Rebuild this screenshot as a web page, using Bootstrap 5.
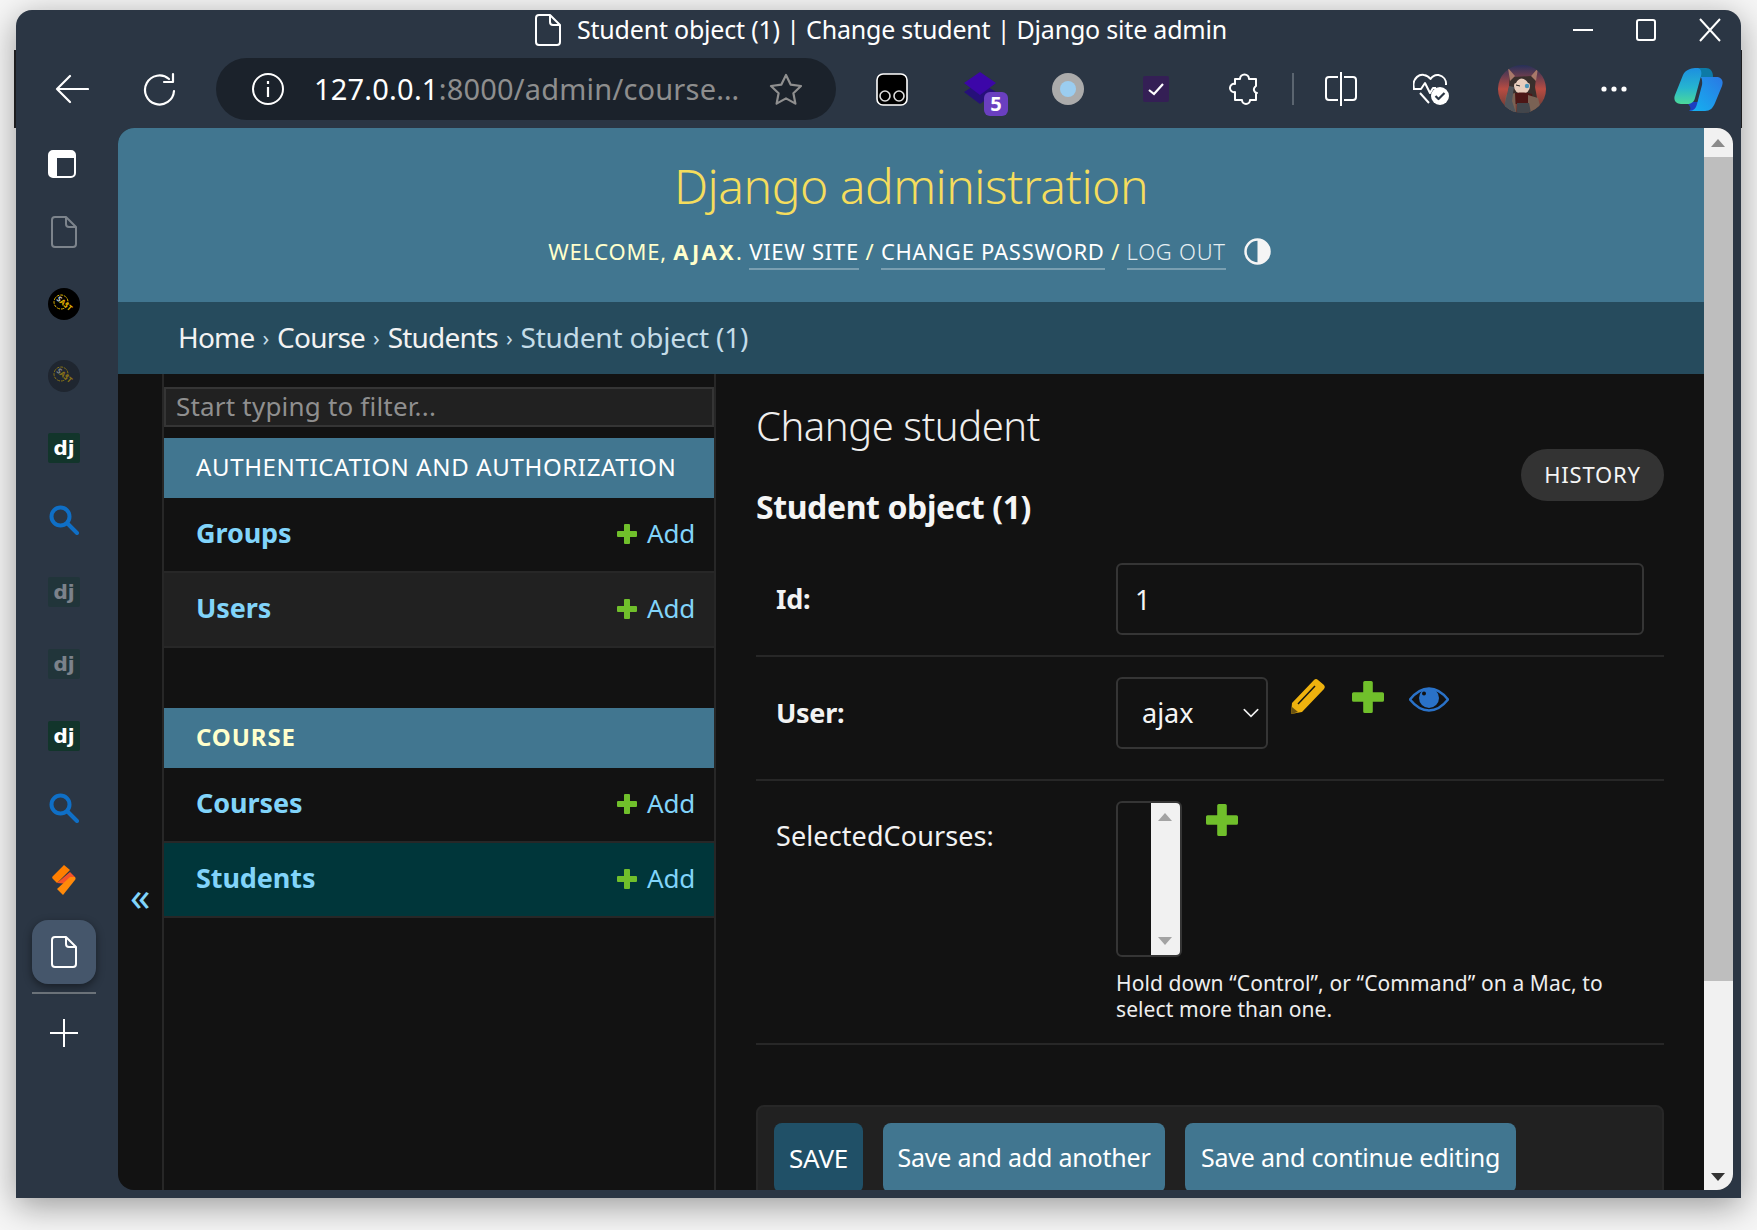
<!DOCTYPE html>
<html lang="en">
<head>
<meta charset="utf-8">
<title>Student object (1) | Change student | Django site admin</title>
<link href="https://cdn.jsdelivr.net/npm/bootstrap@5.3.0/dist/css/bootstrap.min.css" rel="stylesheet">
<style>
html,body{height:100%;overflow:hidden}
body{background:#f6f6f6;font-family:"Noto Sans","Lato",sans-serif;color:#f5f5f5}
.win{position:absolute;left:16px;top:10px;width:1725px;height:1188px;background:#2b3644;border-radius:16px 16px 0 0;box-shadow:0 8px 34px rgba(0,0,0,.38)}
.ttl{height:40px;display:grid;grid-template-columns:1fr auto 1fr;align-items:center;color:#fff}
.ttl-main{grid-column:2;padding-left:5px;font-size:25px;letter-spacing:-.2px;white-space:nowrap;font-weight:400}
.ttl-ctl{justify-self:end;padding-right:19px;gap:41px}
.tbar{height:78px;margin-left:-2px;margin-right:-1px;border-left:2px solid #1d1d1f;border-right:1px solid #1d1d1f;padding-left:16px;display:grid;grid-template-columns:80px 104px 632px 88px 90px 84px 92px 84px 14px 82px 98px 84px 100px 68px;place-items:center}
.reload{margin-right:8px}
.omni{justify-self:start;width:620px;height:62px;background:#1b222b;border-radius:31px;padding:0 33px 0 36px;font-size:29px;letter-spacing:.2px;white-space:nowrap}
.omni b{font-weight:400;color:#fff}.omni span{color:#8e8e8e}
.omni-url{margin-left:30px;margin-right:auto}
.ext-stack{margin:10px 0 0 10px}
.vsep{width:2px;height:32px;background:#5b6570}
.bdy{height:1062px}
.rail{width:102px;flex:none;padding:0 22px 0 16px}
.rail-it{width:64px;height:72px;flex:none}
.rail-it.sm{height:64px;margin-bottom:4px}
.rail-it.act{height:64px;margin-top:4px;background:#45566b;border-radius:16px;box-shadow:0 3px 8px rgba(0,0,0,.45)}
.rail-sep{width:64px;height:2px;background:#6b7279;margin-top:8px;flex:none}
.rail-add{height:78px;width:62px;flex:none}
.tabs-ico{margin-right:4px}
.dimmed{opacity:.38}
.panel{width:1615px;height:1062px;border-radius:16px;overflow:hidden;background:#121212;flex:none}
.pg{width:1586px;flex:none;height:100%}
.hdr{height:174px;background:#417690;text-align:center}
.hdr-t{font-size:48px;font-weight:300;color:#f5dd5d;line-height:60px;padding-top:28px;height:89px;letter-spacing:-.5px;box-sizing:border-box}
.tools{margin-top:17px;font-size:22px;color:#ffc;line-height:34px;letter-spacing:.75px;font-weight:400;margin-left:-3px;white-space:nowrap}
.tools b{font-weight:700;letter-spacing:2.3px}
.tools a{color:#fff;text-decoration:none;border-bottom:2px solid rgba(255,255,255,.3);padding-bottom:2px}
.tools a.lo{color:#e6eef2;font-weight:300}
.theme{margin-left:18px;vertical-align:-5px}
.crumb{height:72px;background:#264b5d;padding:0 0 2px 60px;font-size:28px;color:#c4dce8;letter-spacing:-.2px;font-weight:400}
.crumb a{color:#f2f2f2;text-decoration:none;letter-spacing:-.8px}
.crumb i{font-style:normal;margin:0 8px;font-size:22px}
.mn{height:816px}
.tog{width:44px;flex:none;color:#81d4fa;font-size:40px;padding-top:502px;padding-left:12px;line-height:1}
.sd{width:554px;flex:none;border-left:2px solid #272727;border-right:2px solid #272727;height:100%;padding-top:13px}
.flt{height:40px;margin:0 0 11px;border:2px solid #353535;background:#212121;font-size:26px;color:#999;padding:0 10px 2px;letter-spacing:.2px;border-radius:0;width:100%;box-shadow:none}
.flt::placeholder{color:#8f8f8f}
.flt:focus{background:#212121;border-color:#353535;box-shadow:none}
.cap{height:60px;background:#417690;padding:0 0 2px 32px;font-size:24px;color:#fff;letter-spacing:.65px;font-weight:400}
.cap.cur{color:#ffc;font-weight:700;letter-spacing:.9px}
.rw{height:75px;border-bottom:2px solid #272727;padding:0 19px 2px 32px;background:#121212;color:#81d4fa}
.rw.alt{background:#212121}.rw.sel{background:#00363a}
.rw-n{font-weight:700;letter-spacing:-.1px;font-size:27px}
.rw-a{font-size:26px;letter-spacing:-.2px;gap:10px}
.sep-g{height:60px}
.ct{flex:1;padding:0 40px 0 40px;min-width:0}
.h1x{height:60px;margin-top:22px;font-size:40px;font-weight:300;color:#eee;letter-spacing:-.45px;line-height:60px}
.hst{position:absolute;top:75px;right:40px;width:143px;height:52px;border-radius:26px;background:#333;color:#f5f5f5;font-size:22px;letter-spacing:.8px;padding:0 0 2px;border:0}
.h2x{height:48px;margin-top:27px;font-size:32px;font-weight:700;letter-spacing:-.4px;line-height:48px;color:#f5f5f5}
.frm{margin-top:10px}
.fr{border-bottom:2px solid #272727;display:flex}
.fr-l{width:360px;flex:none;padding-left:20px;font-size:27px;letter-spacing:-.3px;color:#f2f2f2}
.fr-l.top{padding-top:15px;letter-spacing:.1px}
.fr1{padding:22px 0 20px}.fr2{padding:20px 0 30px}.fr3{padding:20px 0 21px}
.inp{width:528px;height:72px;background:#121212;border:2px solid #353535;border-radius:6px;color:#f5f5f5;font-size:27px;padding:0 17px}
.inp:focus{background:#121212;color:#f5f5f5;border-color:#353535;box-shadow:none}
.selx{width:152px;height:72px;background-color:#121212;border:2px solid #353535;border-radius:6px;color:#f5f5f5;font-size:27px;padding:0 0 0 24px;background-size:18px 18px;background-position:right 6px center;background-image:url("data:image/svg+xml,%3csvg xmlns='http://www.w3.org/2000/svg' viewBox='0 0 16 16'%3e%3cpath fill='none' stroke='%23eee' stroke-linecap='round' stroke-width='1.4' d='m2 5 6 6 6-6'/%3e%3c/svg%3e")}
.selx:focus{background-color:#121212;border-color:#353535;color:#f5f5f5;box-shadow:none}
.msel{width:66px;height:156px;border:2px solid #353535;border-radius:6px;background:#121212;overflow:hidden;justify-content:flex-end}
.msb{width:29px;background:#f1f1f1;position:relative;height:100%}
.tri-u,.tri-d{width:0;height:0;border-left:7px solid transparent;border-right:7px solid transparent;margin:0 auto}
.tri-u{border-bottom:8px solid #a3a3a3}.tri-d{border-top:8px solid #a3a3a3}
.hlp{font-size:21px;line-height:26px;letter-spacing:.1px;color:#eee;margin-top:13px;width:510px}
.sbm{margin-top:60px;background:#212121;border:2px solid #272727;border-radius:8px 8px 0 0;padding:16px 16px 30px;gap:20px}
.bt{height:70px;border:0;border-radius:8px;background:#417690;color:#fff;font-size:25px;letter-spacing:-.2px;padding:0}
.bt:hover{background:#417690;color:#fff}
.bt.p{background:#205067;width:89px;font-size:26px}.bt.p:hover{background:#205067}.bt.b{width:282px}.bt.c{width:331px}
.vscr{width:29px;flex:none;background:#f1f1f1;height:100%;position:relative;padding-top:29px}
.vthumb{height:824px;background:#bebebe}
.vscr .tri-u{position:absolute;top:11px;left:7px;border-bottom-color:#8a8a8a}
.vscr .tri-d{position:absolute;bottom:9px;left:7px;border-top-color:#333}
.uico{margin:1px 0 0 22px}.uico2{margin:4px 0 0 26px}.uico3{margin:10px 0 0 25px}.uico4{margin:3px 0 0 24px}
.abs-t{position:absolute;top:10px;left:7px}.abs-b{position:absolute;bottom:10px;left:7px}
</style>
</head>
<body>
<div class="win d-flex flex-column">
  <div class="ttl">
    <div class="ttl-main d-flex align-items-center gap-3 ms-0">
      <svg width="26" height="32" viewBox="0 0 26 32" fill="none" stroke="#fff" stroke-width="2" stroke-linejoin="round"><path d="M4 1h11l10 10v17a3 3 0 0 1-3 3H4a3 3 0 0 1-3-3V4a3 3 0 0 1 3-3z"/><path d="M15 1v7a3 3 0 0 0 3 3h7"/></svg>
      <span>Student object (1) | Change student | Django site admin</span>
    </div>
    <div class="ttl-ctl d-flex align-items-center">
      <svg width="22" height="22" viewBox="0 0 22 22"><path d="M1 11h20" stroke="#fff" stroke-width="2"/></svg>
      <svg width="22" height="22" viewBox="0 0 22 22" fill="none"><rect x="2" y="1" width="18" height="20" rx="2" stroke="#fff" stroke-width="2"/></svg>
      <svg width="24" height="24" viewBox="0 0 24 24"><path d="M2 1l20 22M22 1L2 23" stroke="#fff" stroke-width="2"/></svg>
    </div>
  </div>
  <div class="tbar">
    <svg width="34" height="30" viewBox="0 0 34 30" fill="none" stroke="#fff" stroke-width="2.2" stroke-linecap="round" stroke-linejoin="round"><path d="M33 15H2M15 2 2 15l13 13"/></svg>
    <svg class="reload" width="36" height="34" viewBox="0 0 36 34" fill="none" stroke="#fff" stroke-width="2.2" stroke-linecap="round" stroke-linejoin="round"><path d="M27 7A14.5 14.5 0 1 0 32 19"/><path d="M31 2v8h-9"/></svg>
    <div class="omni d-flex align-items-center">
      <svg width="32" height="32" viewBox="0 0 32 32" fill="none" stroke="#fff" stroke-width="2"><circle cx="16" cy="16" r="15"/><path d="M16 14v10M16 8v3" stroke-width="2.2"/></svg>
      <div class="omni-url"><b>127.0.0.1</b><span>:8000/admin/course…</span></div>
      <svg width="34" height="32" viewBox="0 0 34 32" fill="none" stroke="#8f8f8f" stroke-width="2.2" stroke-linejoin="round"><path d="M17 2l4.6 9.6 10.4 1.4-7.6 7.2 2 10.4L17 25.4 7.6 30.6l2-10.4L2 13l10.4-1.4z"/></svg>
    </div>
    <svg width="32" height="33" viewBox="0 0 32 33"><rect x="1" y="1" width="30" height="31" rx="6" fill="#000" stroke="#fff" stroke-width="1.6"/><circle cx="9" cy="23" r="5" fill="none" stroke="#ddd" stroke-width="1.6"/><circle cx="23" cy="23" r="5" fill="none" stroke="#ddd" stroke-width="1.6"/></svg>
    <svg class="ext-stack" width="44" height="44" viewBox="0 0 44 44"><path d="M0 20 16 32l16-12-16-10z" fill="#26107a"/><path d="M0 11 16 0l16 11-16 12z" fill="#3c06a8"/><rect x="20" y="20" width="24" height="24" rx="6" fill="#6a3fc0"/><text x="32" y="39" text-anchor="middle" font-family="'Noto Sans',sans-serif" font-weight="700" font-size="20" fill="#fff">5</text></svg>
    <svg width="32" height="32" viewBox="0 0 32 32"><circle cx="16" cy="16" r="16" fill="#ababab"/><circle cx="16" cy="16" r="8" fill="#9bcdf0"/></svg>
    <svg width="26" height="26" viewBox="0 0 26 26"><rect width="26" height="26" rx="2" fill="#341f55"/><path d="M6 14l5 4 9-10" fill="none" stroke="#fff" stroke-width="2.2"/></svg>
    <svg width="30" height="32" viewBox="0 0 30 32" fill="none" stroke="#fff" stroke-width="2" stroke-linejoin="round"><path d="M11 6a4.5 4.5 0 0 1 9 0h7v7a4 4 0 0 0-1 1 3.5 3.5 0 0 0 2 6h-1v7h-6a4 4 0 0 1-8 0H6v-8a4 4 0 0 1-5-4 4 4 0 0 1 5-4V6z"/></svg>
    <div class="vsep"></div>
    <svg width="32" height="34" viewBox="0 0 32 34" fill="none" stroke="#fff" stroke-width="2" stroke-linejoin="round"><path d="M13 5H4a3 3 0 0 0-3 3v17a3 3 0 0 0 3 3h9M19 5h9a3 3 0 0 1 3 3v17a3 3 0 0 1-3 3h-9"/><path d="M16 0v34"/></svg>
    <svg width="36" height="34" viewBox="0 0 36 34" fill="none" stroke="#fff" stroke-width="2" stroke-linejoin="round"><path d="M1 16a10 10 0 0 1-.5-4C1 6 6 2 11 3c3 .5 5 2 6.500 4 2-3 5-4.500 8-4 5 1 8 5 7.500 10"/><path d="M0 17h8l4-6 5 10 3-5h3M7 21l9 10"/><circle cx="27" cy="24" r="9" fill="#fff" stroke="none"/><path d="M22.500 24l3 3 6-6" stroke="#2b3644" stroke-width="2.200"/></svg>
    <svg width="48" height="48" viewBox="0 0 48 48"><defs><linearGradient id="av" x1="0" y1="0" x2="0" y2="1"><stop offset="0" stop-color="#26305a"/><stop offset=".5" stop-color="#b84c42"/><stop offset="1" stop-color="#5a3a34"/></linearGradient><clipPath id="avc"><circle cx="24" cy="24" r="24"/></clipPath></defs><g clip-path="url(#avc)"><rect width="48" height="48" fill="url(#av)"/><path d="M12 5l3 7 18-1 6-7-2 18 3 16H8l3-16z" fill="#3a2f2c"/><path d="M10 3l7 8-5 5zM40 3l-7 8 5 5z" fill="#a9796a"/><ellipse cx="24" cy="21" rx="8" ry="8" fill="#e8cdbd"/><path d="M15 19c1-9 17-9 18 0l-3-1c-4-6-9-6-12 0z" fill="#3a2f2c"/><circle cx="29" cy="21" r="2.200" fill="#4a94b8"/><path d="M18 20l4 1" stroke="#222"/><path d="M14 29c6-2 14-2 20 0l2 10H16z" fill="#4c1616"/><path d="M30 30l10 3 4 15H30zM8 30l9-2 1 20H6z" fill="#7a6254"/><path d="M19 38h12l2 10H19z" fill="#42464c"/><path d="M7 38l4-17 5 1-2 14 4 12H6z" fill="#50555b"/></g></svg>
    <svg width="28" height="8" viewBox="0 0 28 8" fill="#fff"><circle cx="4" cy="4" r="2.600"/><circle cx="14" cy="4" r="2.600"/><circle cx="24" cy="4" r="2.600"/></svg>
    <svg width="49" height="43" viewBox="0 0 49 43"><defs><linearGradient id="cp1" x1="0" y1="0" x2="0" y2="1"><stop offset="0" stop-color="#1c8fe0"/><stop offset=".55" stop-color="#26b5cf"/><stop offset="1" stop-color="#4cd99a"/></linearGradient><linearGradient id="cp2" x1="1" y1="0" x2="0" y2="1"><stop offset="0" stop-color="#2a78e4"/><stop offset="1" stop-color="#14b4f0"/></linearGradient></defs><path d="M22 0h10c4 0 7 3 7 9H26z" fill="#0d7aa6"/><path d="M12 34h14l-4 9h-7c3-2 1-6-3-9z" fill="#1c3fc0"/><path d="M16 1c2-1 4-1 7-1 4 0 5 4 4 8l-6 22c-1 4-4 6-8 6H7c-5 0-8-4-6-9L9 7c1-3 4-5 7-6z" fill="url(#cp1)"/><path d="M26 9h16c5 0 8 3 6 9l-7 17c-2 5-5 8-10 8H15c5 0 7-3 8-7l5-19c.500-3 0-8-2-8z" fill="url(#cp2)"/></svg>
  </div>
  <div class="bdy d-flex">
    <div class="rail d-flex flex-column align-items-center">
      <div class="rail-it d-flex align-items-center justify-content-center"><svg class="tabs-ico" width="28" height="28" viewBox="0 0 28 28"><rect x="1" y="1" width="26" height="26" rx="4" fill="none" stroke="#fff" stroke-width="2"/><path d="M1 5a4 4 0 0 1 4-4h18a4 4 0 0 1 4 4v3H9v19H5a4 4 0 0 1-4-4z" fill="#fff"/></svg></div>
      <div class="rail-it sm d-flex align-items-center justify-content-center"><svg width="26" height="32" viewBox="0 0 26 32" fill="none" stroke="#7d848c" stroke-width="2" stroke-linejoin="round"><path d="M4 1h11l10 10v17a3 3 0 0 1-3 3H4a3 3 0 0 1-3-3V4a3 3 0 0 1 3-3z"/><path d="M15 1v7a3 3 0 0 0 3 3h7"/></svg></div>
      <div class="rail-it d-flex align-items-center justify-content-center"><svg width="32" height="32" viewBox="0 0 32 32"><circle cx="16" cy="16" r="16" fill="#000"/><circle cx="13" cy="14" r="7" fill="none" stroke="#e0b400" stroke-width="1" stroke-dasharray="3 1"/><g transform="rotate(40 16 16)"><text x="16" y="18" text-anchor="middle" font-family="'Noto Sans',sans-serif" font-weight="700" font-size="7.500" fill="#d0d0d0">S<tspan fill="#e0b400">AST</tspan></text></g></svg></div>
      <div class="rail-it d-flex align-items-center justify-content-center"><svg width="32" height="32" viewBox="0 0 32 32"><circle cx="16" cy="16" r="16" fill="#1f2630"/><g opacity=".55"><circle cx="13" cy="14" r="7" fill="none" stroke="#e0b400" stroke-width="1" stroke-dasharray="3 1"/><g transform="rotate(40 16 16)"><text x="16" y="18" text-anchor="middle" font-family="'Noto Sans',sans-serif" font-weight="700" font-size="7.500" fill="#d0d0d0">S<tspan fill="#e0b400">AST</tspan></text></g></g></svg></div>
      <div class="rail-it d-flex align-items-center justify-content-center"><svg width="32" height="30" viewBox="0 0 32 30"><rect width="32" height="30" rx="2" fill="#12352b"/><text x="16" y="22" text-anchor="middle" font-family="'DejaVu Sans',sans-serif" font-weight="700" font-size="20" fill="#fff">dj</text></svg></div>
      <div class="rail-it d-flex align-items-center justify-content-center"><svg width="30" height="30" viewBox="0 0 30 30" fill="none" stroke="#0f6fc6" stroke-width="4" stroke-linecap="round"><circle cx="11.500" cy="11.500" r="9"/><path d="M18.500 18.500 28 28"/></svg></div>
      <div class="rail-it d-flex align-items-center justify-content-center"><svg class="dimmed" width="32" height="30" viewBox="0 0 32 30"><rect width="32" height="30" rx="2" fill="#12352b"/><text x="16" y="22" text-anchor="middle" font-family="'DejaVu Sans',sans-serif" font-weight="700" font-size="20" fill="#fff">dj</text></svg></div>
      <div class="rail-it d-flex align-items-center justify-content-center"><svg class="dimmed" width="32" height="30" viewBox="0 0 32 30"><rect width="32" height="30" rx="2" fill="#12352b"/><text x="16" y="22" text-anchor="middle" font-family="'DejaVu Sans',sans-serif" font-weight="700" font-size="20" fill="#fff">dj</text></svg></div>
      <div class="rail-it d-flex align-items-center justify-content-center"><svg width="32" height="30" viewBox="0 0 32 30"><rect width="32" height="30" rx="2" fill="#12352b"/><text x="16" y="22" text-anchor="middle" font-family="'DejaVu Sans',sans-serif" font-weight="700" font-size="20" fill="#fff">dj</text></svg></div>
      <div class="rail-it d-flex align-items-center justify-content-center"><svg width="30" height="30" viewBox="0 0 30 30" fill="none" stroke="#0f6fc6" stroke-width="4" stroke-linecap="round"><circle cx="11.500" cy="11.500" r="9"/><path d="M18.500 18.500 28 28"/></svg></div>
      <div class="rail-it d-flex align-items-center justify-content-center"><svg width="24" height="30" viewBox="0 0 24 30"><path d="M12 0l6 5-13 13-4-4a2 2 0 0 1 0-3z" fill="#ff7f00"/><path d="M5 18 18 7l5 5-6 7z" fill="#f4522a"/><path d="M23 12a2.500 2.500 0 0 1 0 3L11 30l-6-6 13-12z" fill="#ff8a0a"/></svg></div>
      <div class="rail-it act d-flex align-items-center justify-content-center"><svg width="26" height="32" viewBox="0 0 26 32" fill="none" stroke="#fff" stroke-width="2" stroke-linejoin="round"><path d="M4 1h11l10 10v17a3 3 0 0 1-3 3H4a3 3 0 0 1-3-3V4a3 3 0 0 1 3-3z"/><path d="M15 1v7a3 3 0 0 0 3 3h7"/></svg></div>
      <div class="rail-sep"></div>
      <div class="rail-add d-flex align-items-center justify-content-center"><svg width="28" height="28" viewBox="0 0 28 28"><path d="M14 0v28M0 14h28" stroke="#fff" stroke-width="2"/></svg></div>
    </div>
    <div class="panel d-flex">
      <div class="pg d-flex flex-column">
        <header class="hdr">
          <div class="hdr-t">Django administration</div>
          <div class="tools">WELCOME, <b>AJAX</b>. <a href="#">VIEW SITE</a> / <a href="#">CHANGE PASSWORD</a> / <a href="#" class="lo">LOG OUT</a><svg class="theme" width="27" height="27" viewBox="0 0 27 27"><circle cx="13.500" cy="13.500" r="12" fill="none" stroke="#f5f5f5" stroke-width="2.500"/><path d="M13.500 1.500a12 12 0 0 1 0 24z" fill="#f5f5f5"/></svg></div>
        </header>
        <nav class="crumb d-flex align-items-center"><a href="#">Home</a><i>›</i><a href="#">Course</a><i>›</i><a href="#">Students</a><i>›</i><span>Student object (1)</span></nav>
        <div class="mn d-flex">
          <div class="tog">«</div>
          <aside class="sd">
            <input class="form-control flt" type="text" placeholder="Start typing to filter...">
            <div class="cap d-flex align-items-center">AUTHENTICATION AND AUTHORIZATION</div>
            <div class="rw d-flex align-items-center justify-content-between"><span class="rw-n">Groups</span><span class="rw-a d-flex align-items-center"><svg width="20" height="20" viewBox="0 0 20 20"><path d="M7 1a1 1 0 0 1 1-1h4a1 1 0 0 1 1 1v6h6a1 1 0 0 1 1 1v4a1 1 0 0 1-1 1h-6v6a1 1 0 0 1-1 1H8a1 1 0 0 1-1-1v-6H1a1 1 0 0 1-1-1V8a1 1 0 0 1 1-1h6z" fill="#70bf2b"/></svg>Add</span></div>
            <div class="rw alt d-flex align-items-center justify-content-between"><span class="rw-n">Users</span><span class="rw-a d-flex align-items-center"><svg width="20" height="20" viewBox="0 0 20 20"><path d="M7 1a1 1 0 0 1 1-1h4a1 1 0 0 1 1 1v6h6a1 1 0 0 1 1 1v4a1 1 0 0 1-1 1h-6v6a1 1 0 0 1-1 1H8a1 1 0 0 1-1-1v-6H1a1 1 0 0 1-1-1V8a1 1 0 0 1 1-1h6z" fill="#70bf2b"/></svg>Add</span></div>
            <div class="sep-g"></div>
            <div class="cap cur d-flex align-items-center">COURSE</div>
            <div class="rw d-flex align-items-center justify-content-between"><span class="rw-n">Courses</span><span class="rw-a d-flex align-items-center"><svg width="20" height="20" viewBox="0 0 20 20"><path d="M7 1a1 1 0 0 1 1-1h4a1 1 0 0 1 1 1v6h6a1 1 0 0 1 1 1v4a1 1 0 0 1-1 1h-6v6a1 1 0 0 1-1 1H8a1 1 0 0 1-1-1v-6H1a1 1 0 0 1-1-1V8a1 1 0 0 1 1-1h6z" fill="#70bf2b"/></svg>Add</span></div>
            <div class="rw sel d-flex align-items-center justify-content-between"><span class="rw-n">Students</span><span class="rw-a d-flex align-items-center"><svg width="20" height="20" viewBox="0 0 20 20"><path d="M7 1a1 1 0 0 1 1-1h4a1 1 0 0 1 1 1v6h6a1 1 0 0 1 1 1v4a1 1 0 0 1-1 1h-6v6a1 1 0 0 1-1 1H8a1 1 0 0 1-1-1v-6H1a1 1 0 0 1-1-1V8a1 1 0 0 1 1-1h6z" fill="#70bf2b"/></svg>Add</span></div>
          </aside>
          <main class="ct position-relative">
            <div class="h1x">Change student</div>
            <button class="btn hst" type="button">HISTORY</button>
            <div class="h2x">Student object (1)</div>
            <div class="frm">
              <div class="fr fr1"><label class="fr-l fw-bold d-flex align-items-center">Id:</label><input class="form-control inp" value="1"></div>
              <div class="fr fr2"><label class="fr-l fw-bold d-flex align-items-center">User:</label><select class="form-select selx"><option>ajax</option></select>
                <div class="d-flex align-items-start">
                  <svg class="uico" width="36" height="36" viewBox="0 0 36 36"><path d="M24 2a3 3 0 0 1 4 0l6 5a3 3 0 0 1 0 4L12 34 1 36l1-11z" fill="#eeb20e"/><path d="M8 26 25 8" stroke="#121212" stroke-width="1.500"/><path d="M1 36l1-7 6 5z" fill="#121212" opacity=".6"/></svg>
                  <svg class="uico2" width="32" height="32" viewBox="0 0 20 20"><path d="M7 1a1 1 0 0 1 1-1h4a1 1 0 0 1 1 1v6h6a1 1 0 0 1 1 1v4a1 1 0 0 1-1 1h-6v6a1 1 0 0 1-1 1H8a1 1 0 0 1-1-1v-6H1a1 1 0 0 1-1-1V8a1 1 0 0 1 1-1h6z" fill="#70bf2b"/></svg>
                  <svg class="uico3" width="40" height="25" viewBox="0 0 40 25"><path d="M1 12.500C7 5 13 1.500 20 1.500S33 5 39 12.500C33 20 27 23.500 20 23.500S7 20 1 12.500z" fill="none" stroke="#2a72c8" stroke-width="2.500"/><circle cx="20" cy="11" r="10" fill="#2a72c8"/><circle cx="15" cy="6.500" r="2" fill="#121212"/></svg>
                </div>
              </div>
              <div class="fr fr3"><label class="fr-l top">SelectedCourses:</label>
                <div>
                  <div class="d-flex align-items-start">
                    <div class="msel d-flex"><div class="msb"><div class="tri-u abs-t"></div><div class="tri-d abs-b"></div></div></div>
                    <svg class="uico4" width="32" height="32" viewBox="0 0 20 20"><path d="M7 1a1 1 0 0 1 1-1h4a1 1 0 0 1 1 1v6h6a1 1 0 0 1 1 1v4a1 1 0 0 1-1 1h-6v6a1 1 0 0 1-1 1H8a1 1 0 0 1-1-1v-6H1a1 1 0 0 1-1-1V8a1 1 0 0 1 1-1h6z" fill="#70bf2b"/></svg>
                  </div>
                  <div class="hlp">Hold down “Control”, or “Command” on a Mac, to select more than one.</div>
                </div>
              </div>
            </div>
            <div class="sbm d-flex">
              <button class="btn bt p" type="button">SAVE</button>
              <button class="btn bt b" type="button">Save and add another</button>
              <button class="btn bt c" type="button">Save and continue editing</button>
            </div>
          </main>
        </div>
      </div>
      <div class="vscr"><div class="tri-u"></div><div class="vthumb"></div><div class="tri-d"></div></div>
    </div>
  </div>
</div>
</body>
</html>
